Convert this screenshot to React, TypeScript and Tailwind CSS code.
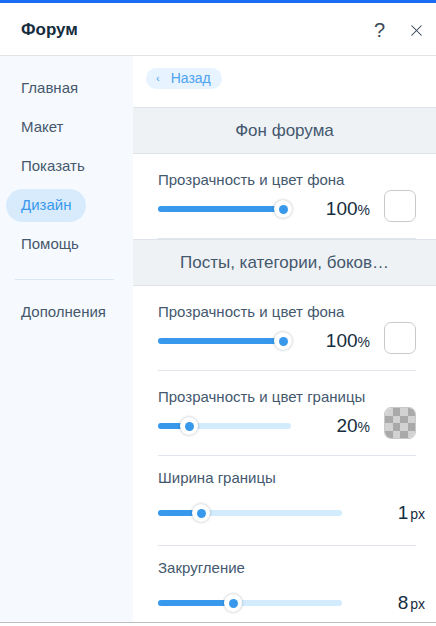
import { X } from 'lucide-react';

const navItems = ['Главная', 'Макет', 'Показать', 'Дизайн', 'Помощь'];

const Slider = ({ width, value }: { width: number; value: number }) => {
    const pos = 8 + (width - 16) * value;
    return (
        <div className="relative h-[18px] shrink-0" style={{ width }}>
            <div className="absolute left-0 right-0 top-[6px] h-[6px] rounded-full bg-[#d3ecfd]" />
            <div className="absolute left-0 top-[6px] h-[6px] rounded-full bg-[#3899ec]" style={{ width: pos }} />
            <div
                className="absolute top-0 flex h-[18px] w-[18px] items-center justify-center rounded-full bg-white shadow-[0_0_3px_rgba(22,45,61,0.35)]"
                style={{ left: pos - 9 }}
            >
                <div className="h-[9px] w-[9px] rounded-full bg-[#3899ec]" />
            </div>
        </div>
    );
};

const Checker = () => (
    <div className="mb-[6px] grid h-[32px] w-[32px] grid-cols-4 grid-rows-4 overflow-hidden rounded-[7px] border border-[#c9c9c9]">
        {Array.from({ length: 16 }).map((_, i) => (
            <div key={i} className={(Math.floor(i / 4) + i) % 2 === 0 ? 'bg-[#d2d2d2]' : 'bg-[#a9a9a9]'} />
        ))}
    </div>
);

const ColorRow = ({ label, value, percent, checker }: { label: string; value: number; percent: string; checker?: boolean }) => (
    <div className="mx-[20px] ml-[25px] border-b border-[#dfe5eb] pb-[13px] pt-[17px]">
        <p className="text-[15px] leading-[18px] text-[#44586e]">{label}</p>
        <div className="mt-[4px] flex h-[32px] items-center">
            <Slider width={133} value={value} />
            <div className="ml-auto mr-[14px] flex items-baseline text-[#162d3d]">
                <span className="text-[19px]">{percent}</span>
                <span className="text-[14px]">%</span>
            </div>
            {checker ? <Checker /> : <div className="mb-[6px] h-[32px] w-[32px] rounded-[7px] border border-[#c9c9c9] bg-white" />}
        </div>
    </div>
);

const PxRow = ({ label, value, px, last }: { label: string; value: number; px: string; last?: boolean }) => (
    <div className={'ml-[25px] mr-[20px] pt-[13px] ' + (last ? 'pb-[10px]' : 'border-b border-[#dfe5eb] pb-[22px]')}>
        <p className="text-[15px] leading-[18px] text-[#44586e]">{label}</p>
        <div className="mt-[16px] flex h-[20px] items-center">
            <Slider width={184} value={value} />
            <div className="-mr-[9px] ml-auto flex items-baseline text-[#162d3d]">
                <span className="text-[19px]">{px}</span>
                <span className="ml-[2px] text-[14px]">px</span>
            </div>
        </div>
    </div>
);

const Band = ({ title }: { title: string }) => (
    <div className="flex h-[47px] items-center justify-center border-y border-[#dde3e9] bg-[#eff2f5] text-[17px] text-[#44586e]">{title}</div>
);

export default function App() {
    return (
        <div className="h-[626px] w-[436px] overflow-hidden bg-white font-['Liberation_Sans',sans-serif]">
            <div className="h-[3px] bg-[#1a6cf2]" />
            <div className="flex h-[53px] items-center border-b border-[#e3e3e3] pl-[21px] pr-[10px] pt-[2px]">
                <h1 className="text-[17px] font-bold text-[#162d3d]">Форум</h1>
                <span className="ml-auto text-[20px] leading-none text-[#3a4756]">?</span>
                <X size={19} strokeWidth={1.3} className="ml-[22px] text-[#2b3a4a]" />
            </div>
            <div className="flex h-[567px] border-b border-[#bdbdbd]">
                <aside className="w-[133px] shrink-0 bg-[#f6faff] pt-[16px]">
                    <div className="flex flex-col gap-[6px]">
                        {navItems.map((item) => (
                            <div
                                key={item}
                                className={
                                    'ml-[6px] flex h-[33px] w-fit items-center rounded-full px-[15px] text-[15px] ' +
                                    (item === 'Дизайн' ? 'bg-[#d8ebfd] text-[#3899ec]' : 'text-[#46586c]')
                                }
                            >
                                {item}
                            </div>
                        ))}
                    </div>
                    <div className="ml-[15px] mt-[18px] h-px w-[99px] bg-[#d7e8f8]" />
                    <div className="ml-[6px] mt-[16px] flex h-[33px] items-center px-[15px] text-[15px] text-[#46586c]">Дополнения</div>
                </aside>
                <main className="flex-1 pt-[12px]">
                    <button className="ml-[13px] flex h-[21px] w-[76px] items-center rounded-full bg-[#e7f3ff] pl-[10px] text-[14px] text-[#4ea3f0]">
                        <span className="text-[11px]">‹</span>
                        <span className="ml-[11px]">Назад</span>
                    </button>
                    <div className="mt-[18px]">
                        <Band title="Фон форума" />
                        <ColorRow label="Прозрачность и цвет фона" value={1} percent="100" />
                        <Band title="Посты, категории, боков…" />
                        <ColorRow label="Прозрачность и цвет фона" value={1} percent="100" />
                        <ColorRow label="Прозрачность и цвет границы" value={0.2} percent="20" checker />
                        <PxRow label="Ширина границы" value={0.21} px="1" />
                        <PxRow label="Закругление" value={0.4} px="8" last />
                    </div>
                </main>
            </div>
        </div>
    );
}
